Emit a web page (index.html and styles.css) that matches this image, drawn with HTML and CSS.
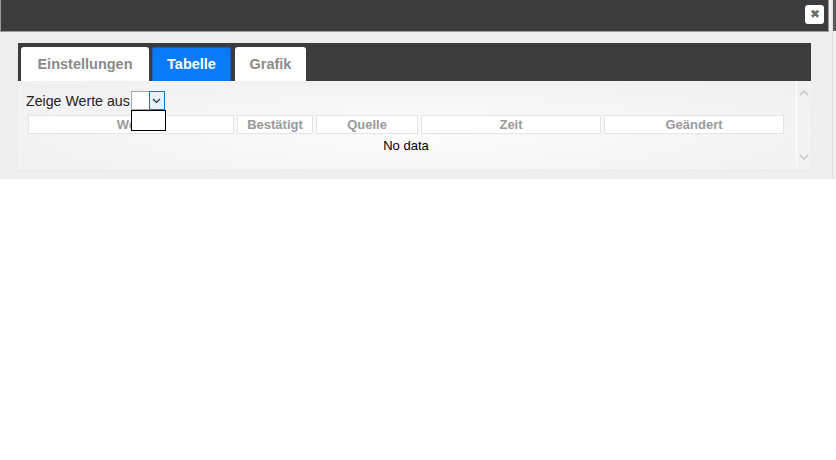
FILE: index.html
```html
<!DOCTYPE html>
<html lang="de">
<head>
    <meta charset="UTF-8">
    <title>Werte</title>
    <link rel="stylesheet" href="styles.css">
</head>
<body>
    <div class="page">
        <div class="dialog">
            <!-- Titelleiste -->
            <div class="titlebar">
                <a class="close" href="javascript:;">&#10006;</a>
            </div>
            <!-- Reiter -->
            <div class="tabs">
                <a class="tab tab-settings" href="javascript:;">Einstellungen</a>
                <a class="tab tab-table active" href="javascript:;">Tabelle</a>
                <a class="tab tab-chart" href="javascript:;">Grafik</a>
            </div>
            <div class="panel">
                <div class="panel-body">
                    <div class="filter">
                        <span>Zeige Werte aus</span>
                        <div class="select">
                            <span class="select-value"></span>
                            <span class="select-arrow">
                                <svg width="9" height="6" viewBox="0 0 9 6"><path d="M1 1l3.5 3.5L8 1" fill="none" stroke="#333" stroke-width="1.2"/></svg>
                            </span>
                            <div class="select-list"></div>
                        </div>
                    </div>
                    <table class="grid">
                        <thead>
                            <tr>
                                <th class="c-wert">Wert</th>
                                <th class="c-ack">Bestätigt</th>
                                <th class="c-from">Quelle</th>
                                <th class="c-time">Zeit</th>
                                <th class="c-lc">Geändert</th>
                            </tr>
                        </thead>
                        <tbody>
                            <tr>
                                <td class="empty" colspan="5">No data</td>
                            </tr>
                        </tbody>
                    </table>
                </div>
                <!-- Scrollleiste -->
                <div class="scroll">
                    <svg width="10" height="7" viewBox="0 0 10 7"><path d="M1 6l4-4 4 4" fill="none" stroke="#c4c4c4" stroke-width="1.5"/></svg>
                    <svg width="10" height="7" viewBox="0 0 10 7"><path d="M1 1l4 4 4-4" fill="none" stroke="#c4c4c4" stroke-width="1.5"/></svg>
                </div>
            </div>
        </div>
        <div class="edge">
            <div class="edge-top"></div>
        </div>
    </div>
</body>
</html>
```

FILE: styles.css
```css
* {
    margin: 0;
    padding: 0;
    box-sizing: border-box;
}
body {
    font-family: "Liberation Sans", Arial, sans-serif;
    background-color: #fff;
}
a {
    text-decoration: none;
}
.page {
    display: flex;
    height: 179px;
}
.dialog {
    width: 832px;
    background-color: #eee;
    padding-right: 3px;
}
.titlebar {
    height: 32px;
    background-color: #3c3c3c;
    border: 1px solid #9a9a9a;
    border-top: none;
    display: flex;
    justify-content: flex-end;
    align-items: flex-start;
    padding: 5px 5px 0 0;
}
.close {
    width: 19px;
    height: 19px;
    margin-right: -1px;
    background-color: #fff;
    border-radius: 3px;
    color: #6a6a6a;
    font-size: 12px;
    line-height: 19px;
    text-align: center;
}
.tabs {
    height: 38px;
    margin: 11px 18px 0 18px;
    background-color: #3c3c3c;
    display: flex;
    align-items: flex-end;
    padding-left: 3px;
}
.tab {
    height: 34px;
    line-height: 34px;
    text-align: center;
    background-color: #fff;
    border-radius: 3px 3px 0 0;
    font-size: 14.5px;
    font-weight: bold;
    color: #8a8a8a;
}
.tab-settings {
    width: 128px;
}
.tab-table {
    width: 79px;
    margin-left: 3px;
}
.tab-chart {
    width: 71px;
    margin-left: 4px;
}
.tab.active {
    background-color: #0a7bf7;
    border: 1px solid #1f5fc2;
    border-bottom: none;
    line-height: 33px;
    color: #fff;
}
.panel {
    height: 90px;
    margin: 0 18px;
    display: flex;
    background: radial-gradient(ellipse at 50% 60%, #fcfcfc 0%, #f4f4f4 60%, #f0f0f0 100%);
    border-bottom: 1px solid #e6e6e6;
}
.panel-body {
    flex: 1;
    padding: 10px 9px 0 8px;
}
.filter {
    display: flex;
    align-items: center;
    height: 19px;
    font-size: 14.2px;
    color: #222;
}
.select {
    position: relative;
    display: flex;
    height: 19px;
    margin-left: 1px;
}
.select-value {
    width: 18px;
    background-color: #fff;
    border: 1px solid #a8a8a8;
    border-right: none;
}
.select-arrow {
    width: 16px;
    background-color: #e5f1fb;
    border: 1px solid #0078d7;
    display: flex;
    align-items: center;
    justify-content: center;
}
/* 打开的下拉列表 */
.select-list {
    position: absolute;
    top: 19px;
    left: 0;
    width: 35px;
    height: 21px;
    background-color: #fff;
    border: 1px solid #000;
    z-index: 2;
}
.grid {
    margin: 5px 0 0 -1px;
    width: 762px;
    table-layout: fixed;
    border-collapse: separate;
    border-spacing: 3px 0;
    font-size: 13px;
}
.grid th {
    height: 19px;
    background-color: #fff;
    border: 1px solid #e4e4e4;
    color: #9a9a9a;
    font-weight: bold;
    text-align: center;
}
.c-wert {
    width: 206px;
}
.c-ack {
    width: 76px;
}
.c-from {
    width: 102px;
}
.c-time {
    width: 180px;
}
.c-lc {
    width: 180px;
}
.grid .empty {
    text-align: center;
    font-size: 13px;
    color: #000;
    padding-top: 4px;
}
.scroll {
    width: 17px;
    border-left: 1px solid #fff;
    display: flex;
    flex-direction: column;
    justify-content: space-between;
    align-items: center;
    padding: 8px 0 5px;
    margin-bottom: 4px;
}
.edge {
    width: 4px;
    background-color: #f0f0f0;
    border-left: 1px solid #e2e2e2;
}
.edge-top {
    height: 31px;
    background-color: #5a5a5a;
}
```
